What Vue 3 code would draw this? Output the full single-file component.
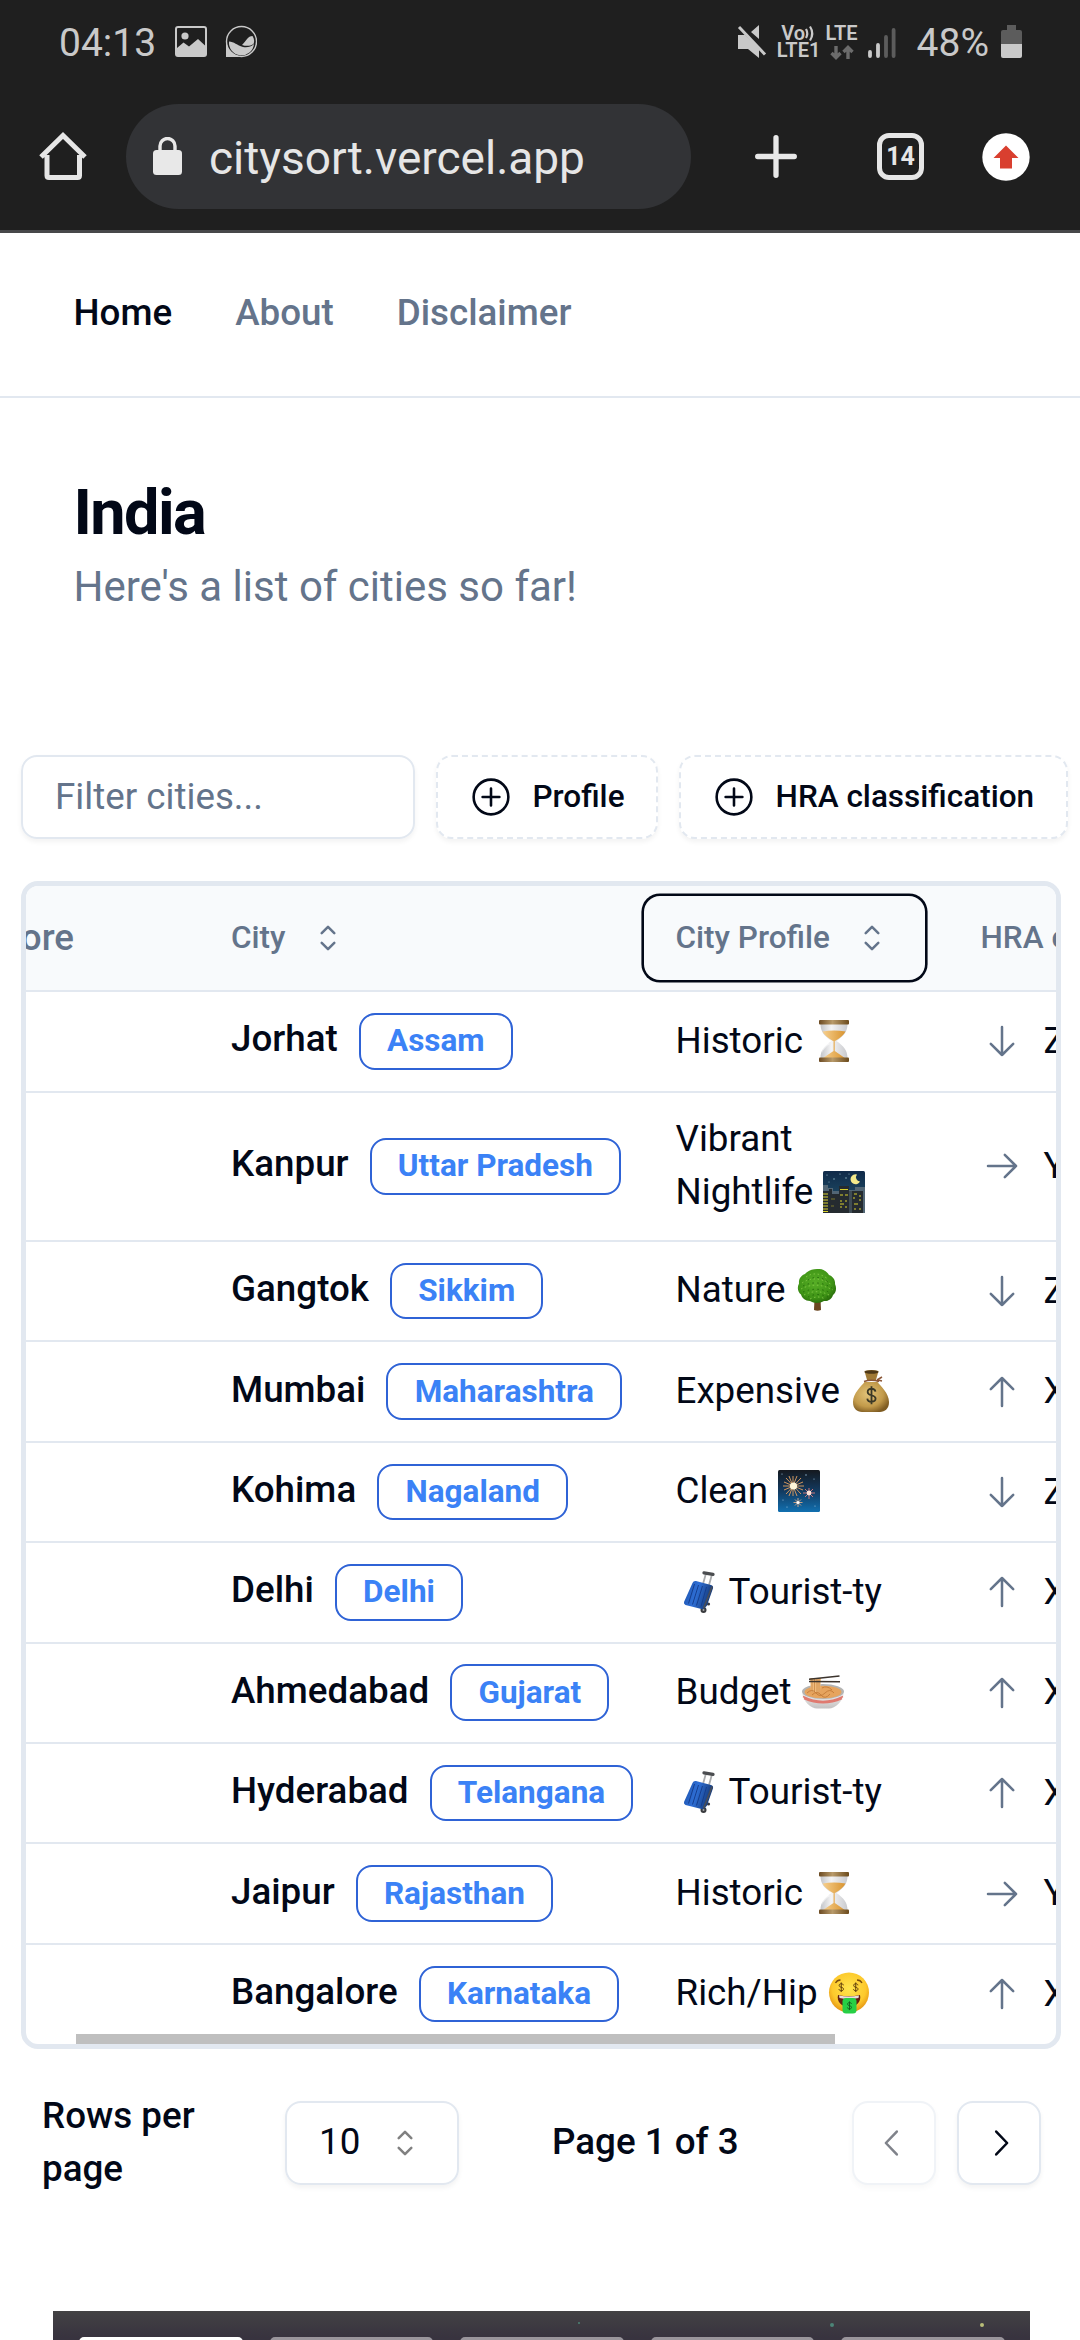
<script setup>
const cities = [
  { name: 'Jorhat', state: 'Assam', profile: 'Historic', emoji: 'hourglass', dir: 'down', hra: 'Z' },
  { name: 'Kanpur', state: 'Uttar Pradesh', profile: 'Vibrant Nightlife', emoji: 'night', dir: 'right', hra: 'Y', tall: true },
  { name: 'Gangtok', state: 'Sikkim', profile: 'Nature', emoji: 'tree', dir: 'down', hra: 'Z' },
  { name: 'Mumbai', state: 'Maharashtra', profile: 'Expensive', emoji: 'moneybag', dir: 'up', hra: 'X' },
  { name: 'Kohima', state: 'Nagaland', profile: 'Clean', emoji: 'fireworks', dir: 'down', hra: 'Z' },
  { name: 'Delhi', state: 'Delhi', profile: 'Tourist-ty', emoji: 'luggage', lead: true, dir: 'up', hra: 'X' },
  { name: 'Ahmedabad', state: 'Gujarat', profile: 'Budget', emoji: 'noodles', dir: 'up', hra: 'X' },
  { name: 'Hyderabad', state: 'Telangana', profile: 'Tourist-ty', emoji: 'luggage', lead: true, dir: 'up', hra: 'X' },
  { name: 'Jaipur', state: 'Rajasthan', profile: 'Historic', emoji: 'hourglass', dir: 'right', hra: 'Y' },
  { name: 'Bangalore', state: 'Karnataka', profile: 'Rich/Hip', emoji: 'moneyface', dir: 'up', hra: 'X' },
]
const filters = ['Profile', 'HRA classification']
</script>

<template>
  <div class="screen">
    <svg class="sprite" width="0" height="0" aria-hidden="true">
      <defs>
        <linearGradient id="g-wood" x1="0" x2="1" y1="0" y2="0">
          <stop offset="0" stop-color="#6b4a22" /><stop offset=".45" stop-color="#b89a6a" /><stop offset="1" stop-color="#6b4a1c" />
        </linearGradient>
        <linearGradient id="g-sand" x1="0" x2="1" y1="0" y2="0">
          <stop offset="0" stop-color="#f6cf8e" /><stop offset="1" stop-color="#d9942f" />
        </linearGradient>
        <linearGradient id="g-glass" x1="0" x2="1" y1="0" y2="0">
          <stop offset="0" stop-color="#c3c5c9" /><stop offset=".4" stop-color="#f4f4f5" /><stop offset="1" stop-color="#c9cace" />
        </linearGradient>
        <linearGradient id="g-night" x1="0" x2="0" y1="0" y2="1">
          <stop offset="0" stop-color="#102a49" /><stop offset="1" stop-color="#255a72" />
        </linearGradient>
        <linearGradient id="g-fire" x1="0" x2="0" y1="0" y2="1">
          <stop offset="0" stop-color="#15191f" /><stop offset=".5" stop-color="#123a60" /><stop offset="1" stop-color="#1170b0" />
        </linearGradient>
        <radialGradient id="g-leaf" cx=".45" cy=".4" r=".6">
          <stop offset="0" stop-color="#57ae26" /><stop offset=".75" stop-color="#3f9416" /><stop offset="1" stop-color="#2c720c" />
        </radialGradient>
        <radialGradient id="g-bag" cx=".42" cy=".4" r=".65">
          <stop offset="0" stop-color="#e3c47a" /><stop offset=".65" stop-color="#c29a4a" /><stop offset="1" stop-color="#7f5c22" />
        </radialGradient>
        <linearGradient id="g-case" x1="0" x2="1" y1="0" y2=".3">
          <stop offset="0" stop-color="#1d4fa6" /><stop offset=".5" stop-color="#2e6fd6" /><stop offset="1" stop-color="#153a7a" />
        </linearGradient>
        <linearGradient id="g-bowl" x1="0" x2="0" y1="0" y2="1">
          <stop offset="0" stop-color="#f4f2f0" /><stop offset="1" stop-color="#c4c2c2" />
        </linearGradient>
        <radialGradient id="g-face" cx=".5" cy=".4" r=".6">
          <stop offset="0" stop-color="#ffe54d" /><stop offset=".7" stop-color="#fdc92c" /><stop offset="1" stop-color="#e59412" />
        </radialGradient>
      </defs>

      <symbol id="hourglass" viewBox="0 0 42 42">
        <path d="M7.500 4h27c0 8-4 12-11 17 7 5 11 9 11 17h-27c0-8 4-12 11-17-7-5-11-9-11-17z" fill="url(#g-glass)" />
        <path d="M9.500 11.500q11.500-2 23 0c-2 4-6 7-10.500 9.500h-2c-4.500-2.500-8.500-5.500-10.500-9.500z" fill="url(#g-sand)" />
        <path d="M20.500 20h1.300v11l10 7H10l10.500-7z" fill="url(#g-sand)" />
        <path d="M10 24c2-2 5-2 7 0-4 2-7 6-8 9z" fill="#fff" opacity=".6" />
        <rect x="6" y="0" width="30" height="4.500" rx="1" fill="url(#g-wood)" />
        <rect x="6" y="37.500" width="30" height="4.500" rx="1" fill="url(#g-wood)" />
      </symbol>

      <symbol id="night" viewBox="0 0 42 42">
        <rect width="42" height="42" rx="1.500" fill="url(#g-night)" />
        <path d="M0 14h5v3h5v3h6v-5h9v4h7v-3h10v26H0z" fill="#526675" />
        <path d="M0 20h6v-2h3v5h7v-8h10v7h3v-2h11v22H0z" fill="#252b30" />
        <path d="M26 20h3v22h-3z" fill="#3f4c55" />
        <g fill="none" stroke="#d9d22e" stroke-width="1.200">
          <path d="M0 23h5M0 26h5M0 29h5M0 32h5M0 35h5M0 38h5M0 40.500h5" />
          <path d="M17 18.500h8M17 24h3m2 0h3M17 30h2m3 0h2M17 33h4M17 36h2m3 0h2M31 23h3m2 2h2M30 27h2m4 2h2M31 33h4M31 38h2m3 0h2" />
          <path d="M8 28h4M8 35h3" stroke="#7b762b" />
        </g>
        <path d="M34 3.500a5 5 0 1 0 3 7 4.300 4.300 0 0 1-3-7z" fill="#f3e98b" />
        <g fill="#9cc3cf"><circle cx="4" cy="4" r=".6" /><circle cx="11" cy="8" r=".7" /><circle cx="17" cy="3" r=".6" /><circle cx="23" cy="7" r=".7" /><circle cx="26" cy="3" r=".5" /><circle cx="6" cy="11" r=".5" /></g>
      </symbol>

      <symbol id="tree" viewBox="0 0 42 42">
        <path d="M18.500 30h6l.5 11q-3.500 1.500-7 0z" fill="#6b4620" />
        <path d="M21 0c6-.5 10 2.500 12 6 4 1.500 6.500 5 6 9 2 4 1 9-2 11-1 4-5 6.500-9 6-4 2.500-10 2.500-14 0-5 0-8-3-9-6.500C1.500 23 1 18 3 14.500 2.500 10 5 6.500 9 5c2.500-3 7-5 12-5z" fill="url(#g-leaf)" />
        <g fill="none" stroke="#85cb49" stroke-width="1" stroke-dasharray="1.500 2.600">
          <path d="M10 8q10-7 22 2M6 14q14-9 30 2M5 20q15-8 32 1M8 26q13-7 27 1M14 30q8-4 15 0" />
        </g>
        <g fill="none" stroke="#256b0b" stroke-width="1" stroke-dasharray="1.500 3.400">
          <path d="M12 11q10-6 20 2M7 17q14-7 29 2M7 23q14-6 28 1M12 28q9-5 20 0" />
        </g>
      </symbol>

      <symbol id="coin-mark" viewBox="0 0 10 16">
        <path d="M8.300 5C8 3.300 6.800 2.600 5 2.600S1.800 3.500 1.800 5.200 3.200 7.500 5 8s3.400 1 3.400 2.800S6.900 13.400 5 13.400 1.700 12.600 1.500 10.800M5 .6v14.800" fill="none" stroke="currentColor" stroke-width="1.500" />
      </symbol>

      <symbol id="moneybag" viewBox="0 0 42 42">
        <path d="M14.500 12c-3 4-11.500 11-11.500 20 0 7 4 9.500 9 10h18c5-.5 9-3 9-10 0-9-8.500-16-11.500-20z" fill="url(#g-bag)" />
        <path d="M14.500 1q7-2 14 0l-2.500 9h-9z" fill="#a07a36" />
        <ellipse cx="21.500" cy="2" rx="7" ry="1.800" fill="#4d3817" />
        <path d="M14 11.500q7.500-2.500 15 0M27 10l5-3M28 10l4 1" stroke="#8b5637" stroke-width="1.500" fill="none" />
        <use href="#coin-mark" x="15.500" y="15.500" width="12" height="19.500" color="#3b3826" />
      </symbol>

      <symbol id="fireworks" viewBox="0 0 42 42">
        <rect width="42" height="42" rx="1.500" fill="url(#g-fire)" />
        <g stroke="#e7a15f" stroke-width=".9" fill="none">
          <path d="M15 6v20M5 16h21M8 8l15 16M23 8 8 24M11 6l8 20M19 6l-8 20M6 12l19 8M6 20l19-8" />
          <path d="M31 18v11M25 23h12M27 19l8 8M35 19l-8 8" stroke="#de7c7a" />
          <path d="M20 28v9M15.500 32.500h9M17 29.500l6 6M23 29.500l-6 6" stroke="#dbaa88" />
        </g>
        <circle cx="15.500" cy="16" r="3.600" fill="#fff6d9" /><circle cx="31" cy="23" r="2.400" fill="#ffe3d8" /><circle cx="20" cy="32.500" r="1.500" fill="#fff" />
        <g fill="#9fc4df"><circle cx="4" cy="4" r=".6" /><circle cx="28" cy="5" r=".7" /><circle cx="36" cy="9" r=".6" /><circle cx="5" cy="30" r=".6" /><circle cx="37" cy="36" r=".6" /><circle cx="9" cy="37" r=".6" /></g>
      </symbol>

      <symbol id="luggage" viewBox="0 0 42 42">
        <path d="M26 13l2.800-10M32 14l2.800-10" stroke="#a9abad" stroke-width="1.800" />
        <path d="M27 1.800l9 1.600" stroke="#4b4d50" stroke-width="3.200" stroke-linecap="round" />
        <circle cx="26.500" cy="39" r="3" fill="#393b3e" /><circle cx="31.500" cy="33" r="1.600" fill="#393b3e" />
        <path d="M15.500 12q1-2.500 3.500-2l15 4q2.500.8 2 3.200l-6 17.300-3.500 4L8.500 34q-2-.8-1.500-3z" fill="url(#g-case)" />
        <path d="M17.500 13l-6 19.500M21.500 14l-6 19.500M25.500 15l-6 19.500M29.500 16l-5.500 19.500" stroke="#153e8e" stroke-width="1" />
        <path d="M35 15.500l-8.500 22" stroke="#474d59" stroke-width="1.800" />
        <circle cx="26.500" cy="39" r="1" fill="#a4a6a8" />
      </symbol>

      <symbol id="noodles" viewBox="0 0 42 42">
        <path d="M0 21h42c-.5 9-9 16.500-15 16.500H15C9 37.500.5 30 0 21z" fill="url(#g-bowl)" />
        <ellipse cx="21" cy="20.500" rx="21" ry="7.500" fill="#b3b4b4" />
        <ellipse cx="21" cy="21" rx="18.500" ry="6.300" fill="#e6a45e" />
        <path d="M8 7h11l-1 14H9z" fill="#efbb7d" />
        <path d="M10 7v14M12.500 7v14M15 7v14M17 7v14" stroke="#c98743" stroke-width=".8" />
        <path d="M5 22q5-5 9 0t9 0 9 0M10 24q5-5 9 0t9-1M20 17q5-3 10 2" fill="none" stroke="#c67f3c" stroke-width="1" />
        <path d="M1 25.500q20 10 40 0M2 27.500q19 8.500 38 0" fill="none" stroke="#e07a70" stroke-width="1.400" />
        <path d="M7 8.300l30.500-3.300M7 10.500l31 .2" stroke="#3c342d" stroke-width="1.500" />
      </symbol>

      <symbol id="moneyface" viewBox="0 0 42 42">
        <ellipse cx="21" cy="20.500" rx="20" ry="20" fill="url(#g-face)" />
        <path d="M10 23q11 2.500 22 0c1.500 6-3 12-11 12s-12.500-6-11-12z" fill="#642012" />
        <path d="M11 23.500q10 2 20 0l-.5 2.500q-9.500 2-19 0z" fill="#fff" opacity=".85" />
        <rect x="14.500" y="26" width="14" height="15.500" rx="3.500" fill="#27cf45" />
        <use href="#coin-mark" x="10" y="10" width="6.500" height="10.500" color="#5b3a0b" />
        <use href="#coin-mark" x="24.500" y="10" width="6.500" height="10.500" color="#5b3a0b" />
        <use href="#coin-mark" x="18.500" y="29" width="6" height="9.500" color="#14581f" />
        <path d="M7.500 11q1.500-3 5-3M34 11q-1.500-3-5-3" stroke="#7c4d0d" stroke-width="1.300" fill="none" />
      </symbol>

      <symbol id="caret-sort" viewBox="0 0 15 15">
        <path d="M5.250 5.750 7.500 3.500l2.250 2.250M5.250 9.250 7.500 11.500l2.250-2.250" fill="none" stroke="currentColor" stroke-width=".9" stroke-linecap="round" stroke-linejoin="round" />
      </symbol>
    </svg>

    <div class="status">
      <span class="clock">04:13</span>
      <svg class="i-photo" width="32" height="31" viewBox="0 0 32 31">
        <path fill-rule="evenodd" fill="#c9c9c9" d="M3 0h26a3 3 0 0 1 3 3v25a3 3 0 0 1-3 3H3a3 3 0 0 1-3-3V3a3 3 0 0 1 3-3zM2 3v19l6.500-5.500L14 20.500l9-7.500 7 6.500V3q0-1-1-1H3Q2 2 2 3z" />
        <circle cx="10" cy="10" r="3.600" fill="#c9c9c9" />
      </svg>
      <svg class="i-app" width="32" height="33" viewBox="0 0 32 33">
        <path d="M1 17v15h15" fill="#c9c9c9" />
        <circle cx="16.500" cy="16.500" r="15" fill="#1f1f1f" stroke="#c9c9c9" stroke-width="1.400" />
        <path d="M4 16.500c5 0 8 4 14 5.500 4 .8 8 0 11-3a12.500 12.500 0 0 1-25-2.500z" fill="#c9c9c9" />
        <path d="M17 20c4-4 6-9 10.500-9 2 3 2 6 1 8-3 2-7 2.500-11.500 1z" fill="#c9c9c9" />
      </svg>
      <span class="grow"></span>
      <svg class="i-mute" width="30" height="33" viewBox="0 0 30 33">
        <path d="M1 10h7l14 14v9L11 24H1zM14 7l8-7v14z" fill="#c9c9c9" />
        <path d="M2 2l26 27.500" stroke="#c9c9c9" stroke-width="3" />
      </svg>
      <span class="volte"><b>Vo<svg width="11" height="17" viewBox="0 0 11 17"><path d="M1 4q2.500 4.500 0 9M5 1.500q4.500 7 0 14" fill="none" stroke="#c9c9c9" stroke-width="2.200" /></svg></b><b>LTE1</b></span>
      <span class="lte"><b>LTE</b>
        <svg width="24" height="15" viewBox="0 0 24 15"><path d="M6 1v11M1.500 8 6 12.500 10.500 8M18 14V3M13.500 7 18 2.500 22.500 7" fill="none" stroke="#6c6c6c" stroke-width="3.400" /></svg>
      </span>
      <svg class="i-signal" width="28" height="30" viewBox="0 0 28 30">
        <path d="M2 28v-4M10 28V17" stroke="#c9c9c9" stroke-width="3.800" stroke-linecap="round" />
        <path d="M18 28V9M25.600 28V2" stroke="#5c5c5c" stroke-width="3.800" stroke-linecap="round" />
      </svg>
      <span class="pct">48%</span>
      <svg class="i-batt" width="21" height="33" viewBox="0 0 21 33">
        <path d="M6 0h9v5h4a2 2 0 0 1 2 2v12H0V7a2 2 0 0 1 2-2h4z" fill="#5c5c5c" />
        <path d="M0 19h21v12a2 2 0 0 1-2 2H2a2 2 0 0 1-2-2z" fill="#c9c9c9" />
      </svg>
    </div>

    <div class="toolbar">
      <svg class="i-home" width="48" height="49" viewBox="0 0 48 49">
        <path d="M8 23v20.500q0 2 2 2h28.500q2 0 2-2V23M2 25 24 3.500 46 25" fill="none" stroke="#e6e6e6" stroke-width="5" stroke-linejoin="miter" />
      </svg>
      <div class="omnibox">
        <svg width="29" height="38" viewBox="0 0 29 38">
          <rect x="0" y="13" width="29" height="25" rx="3.500" fill="#e8e8e8" />
          <path d="M7 14V9a7.500 7.500 0 0 1 15 0v5" fill="none" stroke="#e8e8e8" stroke-width="3.400" />
        </svg>
        <span>citysort.vercel.app</span>
      </div>
      <svg class="i-plus" width="42" height="43" viewBox="0 0 42 43"><path d="M2.700 21.500h36.600M21 2.700v37.600" stroke="#e8e8e8" stroke-width="5.300" stroke-linecap="round" /></svg>
      <div class="tabs">14</div>
      <svg class="i-update" width="48" height="48" viewBox="0 0 48 48"><circle cx="24" cy="24" r="23.700" fill="#fff" /><path d="M24 12.500 36.500 25H30v10.500H18V25h-6.500z" fill="#d93f2f" /></svg>
    </div>

    <nav class="nav"><a class="active">Home</a><a>About</a><a>Disclaimer</a></nav>

    <header class="intro">
      <h1>India</h1>
      <p>Here's a list of cities so far!</p>
    </header>

    <div class="filters">
      <div class="input">Filter cities...</div>
      <button v-for="f in filters" :key="f" class="dashed">
        <svg width="42" height="42" viewBox="0 0 15 15" fill="none" stroke="#020817" stroke-width=".92" stroke-linecap="round">
          <circle cx="7.500" cy="7.500" r="6.200" /><path d="M7.500 4.500v6M4.500 7.500h6" />
        </svg>{{ f }}
      </button>
    </div>

    <section class="table">
      <div class="row head">
        <div class="c-score">Score</div>
        <div class="c-city">City<svg class="sort"><use href="#caret-sort" /></svg></div>
        <div class="c-profile"><span class="focused">City Profile<svg class="sort"><use href="#caret-sort" /></svg></span></div>
        <div class="c-hra">HRA classification</div>
      </div>
      <div v-for="c in cities" :key="c.name" class="row" :class="{ tall: c.tall }">
        <div class="c-score"></div>
        <div class="c-city"><div class="pair"><span class="name">{{ c.name }}</span><span class="badge">{{ c.state }}</span></div></div>
        <div class="c-profile">
          <p><template v-if="c.lead"><svg class="emoji"><use :href="'#' + c.emoji" /></svg>&nbsp;{{ c.profile }}</template><template v-else>{{ c.profile }}&nbsp;<svg class="emoji"><use :href="'#' + c.emoji" /></svg></template></p>
        </div>
        <div class="c-hra">
          <svg class="arrow" :class="c.dir" viewBox="0 0 15 15"><path d="M7.500 2.500v10M3.500 8.500l4 4 4-4" fill="none" stroke="#64748b" stroke-width=".9" stroke-linecap="round" stroke-linejoin="round" /></svg>{{ c.hra }}
        </div>
      </div>
      <div class="thumb"></div>
    </section>

    <footer class="pager">
      <p class="rpp">Rows per page</p>
      <div class="select">10<svg class="sort"><use href="#caret-sort" /></svg></div>
      <p class="page">Page 1 of 3</p>
      <button class="step off"><svg width="42" height="42" viewBox="0 0 15 15"><path d="M8.500 3.400 4.600 7.500l3.900 4.100" /></svg></button>
      <button class="step"><svg width="42" height="42" viewBox="0 0 15 15"><path d="M6.500 3.400l3.900 4.100-3.900 4.100" /></svg></button>
    </footer>

    <div class="banner">
      <i class="key lit"></i><i class="key"></i><i class="key"></i><i class="key"></i><i class="key"></i>
      <i class="spark a"></i><i class="spark b"></i><i class="spark c"></i>
    </div>
  </div>
</template>

<style>
body { margin: 0; background: #fff; }
</style>

<style scoped>
* { box-sizing: border-box; }
.screen {
  width: 1080px; height: 2340px; overflow: hidden; display: flex; flex-direction: column;
  background: #fff; color: #020817; font-family: Roboto, sans-serif; font-size: 36.750px; line-height: 52.500px;
}
.screen > * { flex: none; }
.sprite { position: absolute; }
svg { flex: none; display: block; }
p, h1 { margin: 0; }
button { font: inherit; color: inherit; background: #fff; padding: 0; }
.grow { flex: 1; }

.status { height: 83px; background: #1f1f1f; color: #c9c9c9; display: flex; align-items: center; padding: 0 58px 0 59px; font-size: 39px; }
.clock, .pct { line-height: 40px; margin-top: 3px; }
.i-photo { margin-left: 19px; }
.i-app { margin-left: 18px; }
.i-mute { margin-right: 12px; }
.volte, .lte { display: flex; flex-direction: column; font-size: 20px; line-height: 17px; height: 34px; width: 40px; }
.volte b, .lte b { display: flex; justify-content: center; font-weight: 600; height: 17px; }
.volte { margin-right: 7px; }
.lte { width: 32px; margin-right: 10px; align-items: center; }
.lte svg { margin-top: 3px; }
.i-signal { margin-right: 21px; margin-top: 2px; }
.i-batt { margin-left: 12px; }

.toolbar { height: 150px; background: #1f1f1f; border-bottom: 3px solid #47484a; display: flex; align-items: center; padding: 0 50px 0 39px; }
.omnibox { width: 566px; height: 105px; margin-left: 39px; border-radius: 53px; background: #323336; display: flex; align-items: center; padding-left: 27px; color: #e6e6e6; font-size: 46px; }
.omnibox span { margin-left: 27px; margin-top: 3px; }
.omnibox svg { margin-bottom: 2px; }
.i-plus { margin-left: 64px; }
.tabs { width: 47px; height: 47px; margin-left: 80px; border: 5px solid #e6e6e6; border-radius: 12px; color: #e6e6e6; font-size: 25px; font-weight: 700; line-height: 37px; text-align: center; }
.i-update { margin-left: 58px; }

.nav { height: 165px; border-bottom: 2px solid #e2e8f0; display: flex; align-items: center; gap: 63px; padding: 0 73.500px 2px; font-weight: 500; color: #64748b; }
.nav .active { color: #020817; }
.intro { padding: 73px 73.500px 0; height: 357px; }
.intro h1 { font-size: 63px; line-height: 84px; font-weight: 700; letter-spacing: -.025em; }
.intro p { font-size: 42px; line-height: 63px; color: #64748b; }

.filters { display: flex; gap: 21px; padding-left: 21px; height: 84px; }
.input { width: 394px; flex: none; border: 2px solid #e2e8f0; border-radius: 16px; padding-left: 32px; line-height: 80px; color: #64748b; box-shadow: 0 3px 5px rgba(0, 0, 0, .05); }
.dashed { flex: none; display: flex; align-items: center; gap: 21px; padding: 0 31.500px; border: 2px dashed #e2e8f0; border-radius: 16px; font-size: 31.500px; font-weight: 500; white-space: nowrap; box-shadow: 0 3px 5px rgba(0, 0, 0, .05); }

.table { position: relative; width: 1040px; height: 1168px; margin: 42px 0 0 21px; border: 5px solid #e2e8f0; border-radius: 17px; overflow: hidden; }
.row { display: flex; width: 1500px; height: 100.400px; border-bottom: 2px solid #e2e8f0; }
.row > div { display: flex; align-items: center; flex: none; }
.row.tall { height: 149.300px; }
.row.head { height: 106.300px; background: #f8fafc; color: #64748b; font-size: 31.500px; font-weight: 500; }
.row:nth-last-child(2) { border-bottom-color: transparent; }
.c-score { width: 205px; padding-right: 157px; justify-content: flex-end; font-size: 36.750px; }
.c-city { width: 444.500px; }
.c-profile { width: 305px; }
.c-hra { white-space: nowrap; }
.sort { width: 42px; height: 42px; margin-left: 21px; }
.focused { display: flex; align-items: center; height: 84px; margin-left: -31.500px; padding: 0 32px 0 31.500px; border-radius: 16px; box-shadow: 0 0 0 2.600px #020817; }
.focused .sort { margin-left: 21.500px; }
.pair { display: flex; align-items: baseline; }
.name { font-weight: 500; line-height: 42px; }
.badge { margin-left: 21px; padding: 5.250px 26.250px; border: 2px solid #2f63d6; border-radius: 16px; font-size: 31.500px; line-height: 42px; font-weight: 700; color: #3b82f6; }
.c-profile p { width: 250px; margin-bottom: 1px; }
.emoji { display: inline-block; width: 42px; height: 42px; margin: 0 1px; vertical-align: -9px; }
.arrow { width: 42px; height: 42px; margin-right: 21px; }
.arrow.up { transform: rotate(180deg); }
.arrow.right { transform: rotate(-90deg); }
.thumb { position: absolute; left: 50px; bottom: 0; width: 759px; height: 10px; background: #bfbfbf; }

.pager { display: flex; align-items: center; height: 105px; margin: 41px 0 0 42px; font-weight: 500; }
.rpp { width: 222px; padding-right: 40px; }
.select { width: 174px; height: 84px; margin-left: 21px; border: 2px solid #e2e8f0; border-radius: 16px; display: flex; align-items: center; padding-left: 32px; font-weight: 400; box-shadow: 0 3px 5px rgba(0, 0, 0, .05); }
.select .sort { color: #808080; margin-left: 24px; }
.page { width: 300px; padding-left: 93px; box-sizing: content-box; }
.step { width: 84px; height: 84px; border: 2px solid #e2e8f0; border-radius: 16px; display: flex; align-items: center; justify-content: center; box-shadow: 0 3px 5px rgba(0, 0, 0, .05); }
.step + .step { margin-left: 21px; }
.step.off { opacity: .5; }
.step path { fill: none; stroke: #020817; stroke-width: .9; stroke-linecap: round; stroke-linejoin: round; }

.banner { position: relative; display: flex; gap: 27px; width: 977px; height: 60px; margin: 116px 0 0 53px; padding: 26px 26px 0; overflow: hidden; background: linear-gradient(#434244, #38333f 26px); }
.key { width: 163.500px; flex: none; height: 60px; border-radius: 5px; background: #9a959c; }
.key.lit { background: #fff; }
.spark { position: absolute; top: 12px; width: 4px; height: 4px; border-radius: 50%; background: #4c8577; }
.spark.a { left: 525px; top: 11px; width: 2px; height: 2px; }
.spark.b { left: 777px; }
.spark.c { left: 927px; background: #b9bd78; }
</style>
